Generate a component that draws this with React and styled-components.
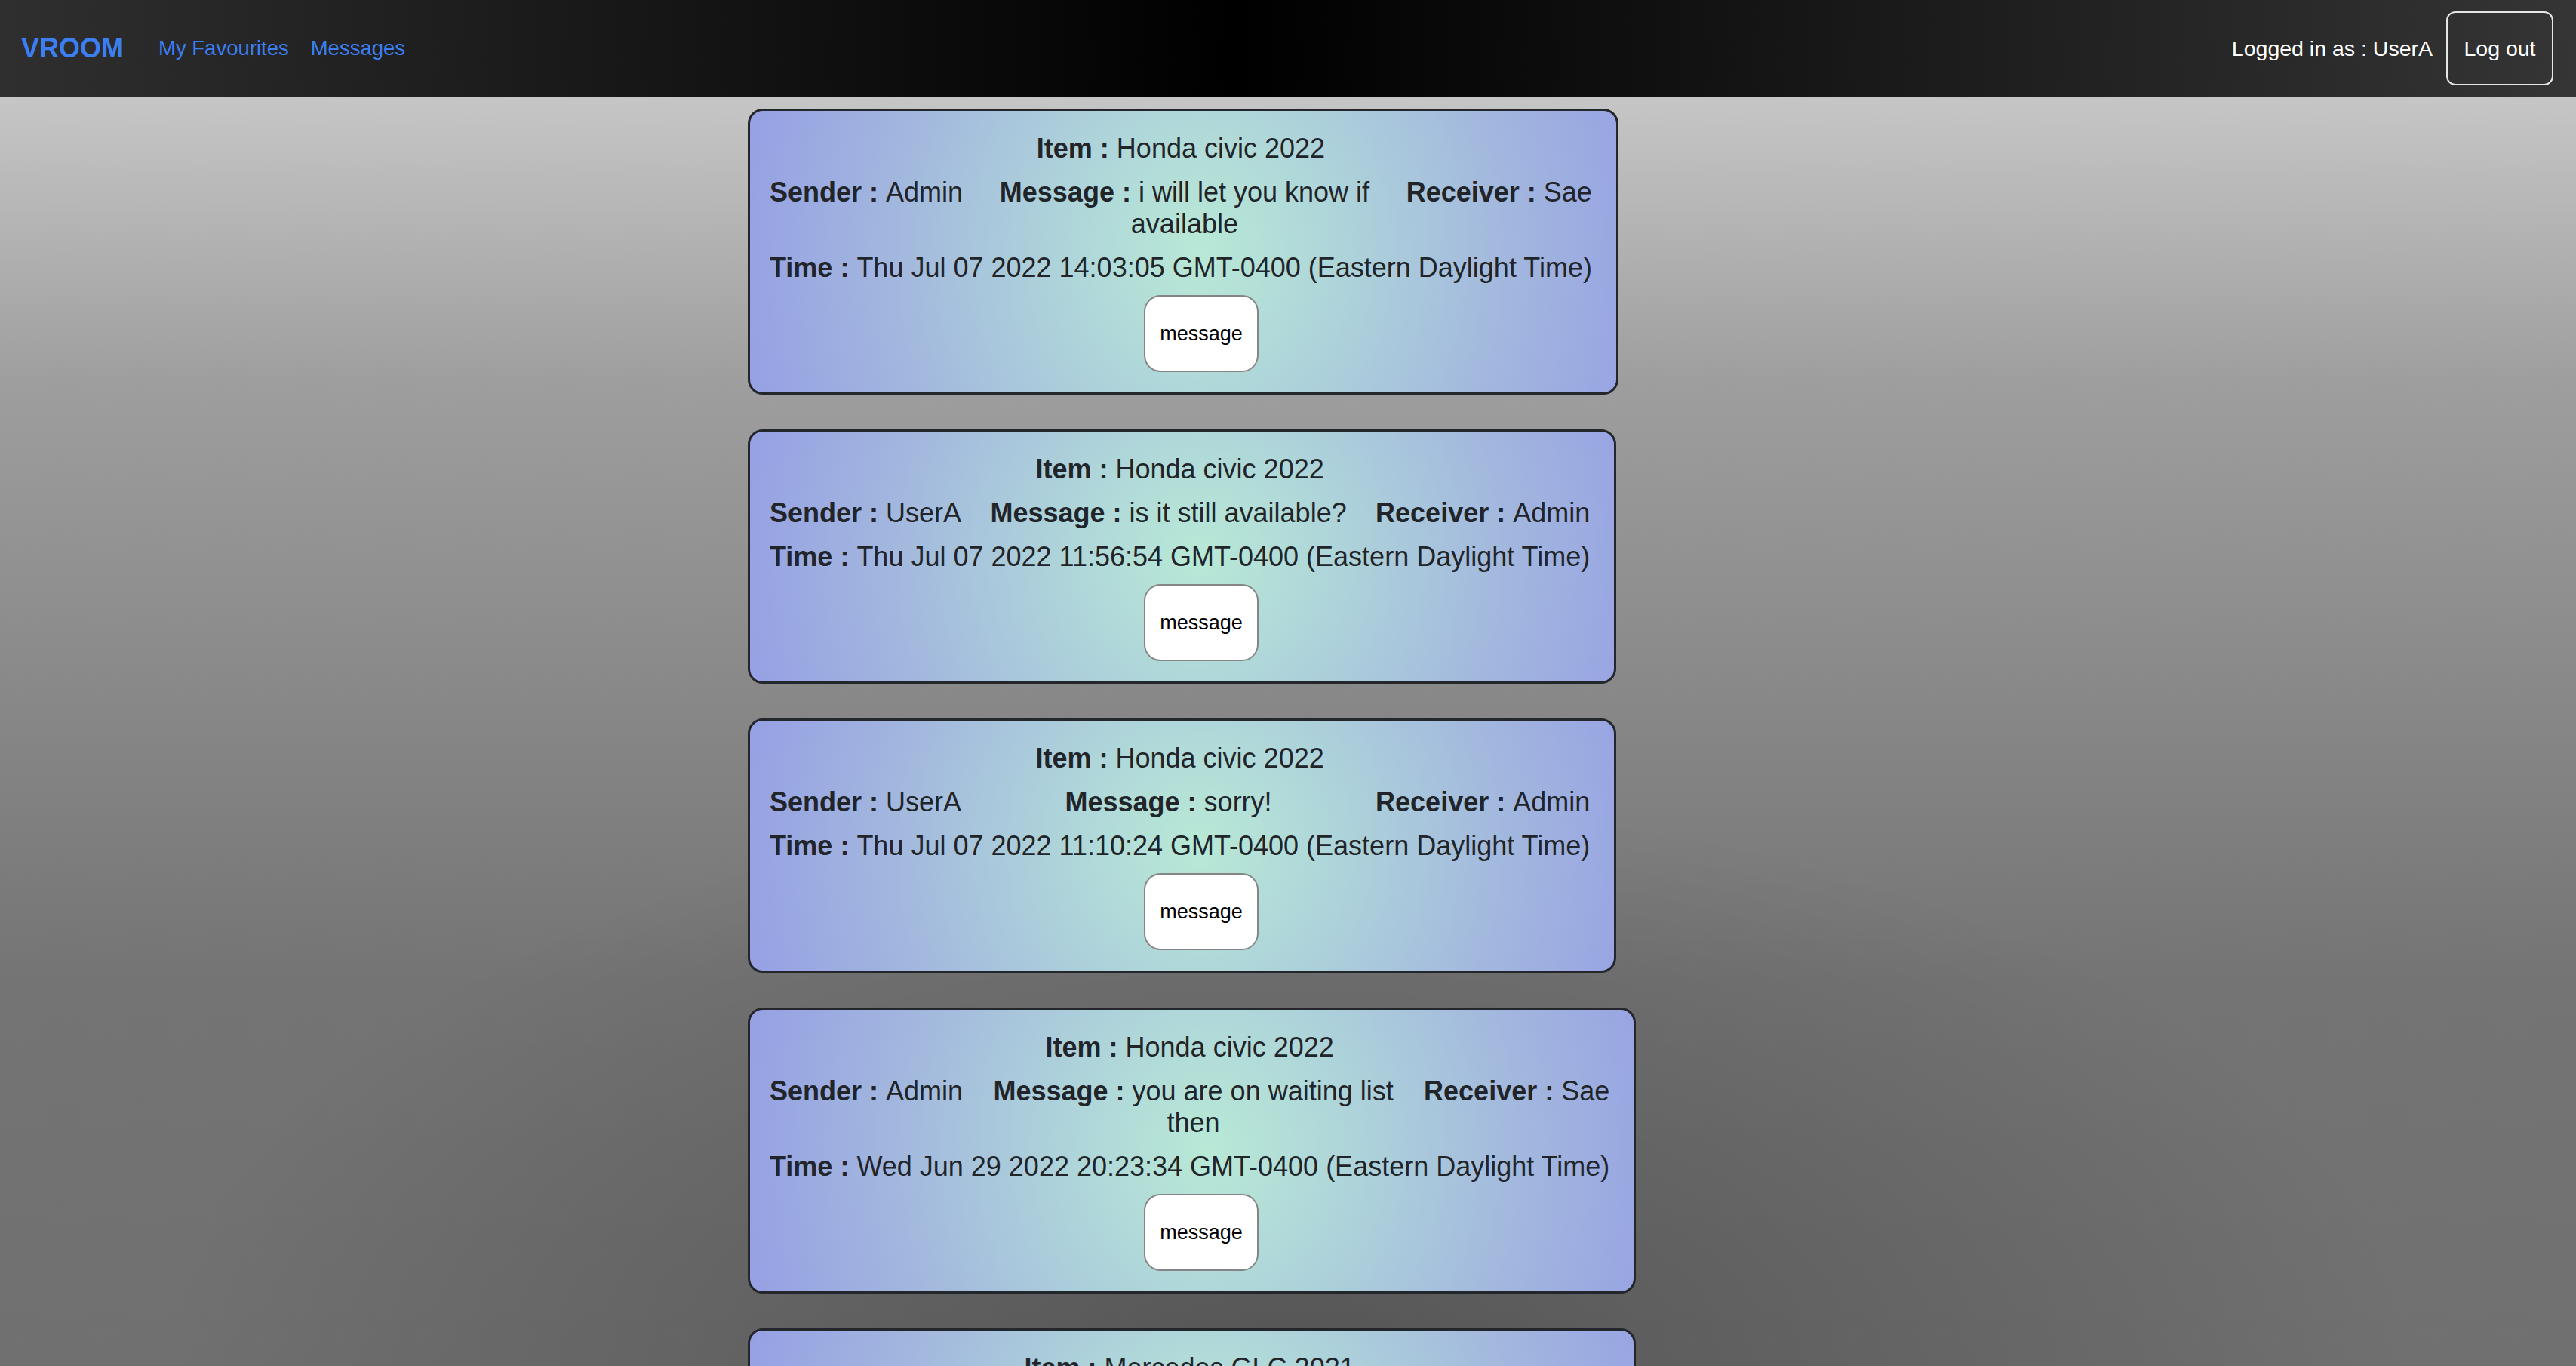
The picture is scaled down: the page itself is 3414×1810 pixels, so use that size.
import styled, { createGlobalStyle } from 'styled-components';

const GlobalStyle = createGlobalStyle`
  html, body {
    margin: 0;
    padding: 0;
  }

  body {
    font-family: "Liberation Sans", Arial, sans-serif;
    color: #212529;
  }
`;

const Page = styled.div`
  height: 100vh;
  overflow: hidden;
  background:
    radial-gradient(
      ellipse 1500px 760px at 50% 100%,
      rgba(0, 0, 0, 0.24) 0%,
      rgba(0, 0, 0, 0) 100%
    ),
    linear-gradient(
      180deg,
      #cdcdcd 0%,
      #c6c6c6 7%,
      #9e9e9e 28%,
      #747474 72%,
      #707070 100%
    );
`;

const NavBar = styled.nav`
  display: flex;
  align-items: center;
  height: 128px;
  padding: 0 30px 0 28px;
  background: linear-gradient(90deg, #2f2f2f 0%, #000 48%, #353535 100%);
`;

const Brand = styled.a`
  color: #3b7ff2;
  font-size: 36px;
  font-weight: bold;
  text-decoration: none;
  margin-right: 46px;
`;

const NavLink = styled.a`
  color: #3b7ff2;
  font-size: 27.5px;
  text-decoration: none;
  margin-right: 29px;
`;

const UserArea = styled.div`
  margin-left: auto;
  display: flex;
  align-items: center;
  gap: 18px;
`;

const LoggedIn = styled.span`
  color: #fff;
  font-size: 28.5px;
`;

const LogoutButton = styled.button`
  width: 142px;
  height: 98px;
  border: 2px solid #e6e6e6;
  border-radius: 12px;
  background: transparent;
  color: #fff;
  font-family: inherit;
  font-size: 28.5px;
`;

const Feed = styled.main`
  width: 1432px;
  margin: 16px auto 0;
  display: flex;
  flex-direction: column;
  align-items: flex-start;
  gap: 46px;
`;

const Card = styled.section`
  display: flex;
  flex-direction: column;
  gap: 16px;
  padding: 29px 32px 27px 26px;
  border: 3px solid #23262b;
  border-radius: 20px;
  font-size: 36px;
  line-height: 42px;
  background: radial-gradient(
    ellipse 54% 190% at 52% 50%,
    #b8e9d6 0%,
    #aed4da 30%,
    #a2b7de 66%,
    #96a0e4 100%
  );
`;

const Label = styled.b`
  font-weight: bold;
`;

const ItemLine = styled.div`
  text-align: center;
  white-space: nowrap;
`;

const PartyRow = styled.div`
  display: flex;
  justify-content: space-between;
  width: 0;
  min-width: 100%;
`;

const Party = styled.div`
  flex: 0 0 auto;
  white-space: nowrap;
`;

const MessageText = styled.div`
  flex: 0 1 auto;
  min-width: 0;
  margin: 0 14px;
  text-align: center;
`;

const TimeLine = styled.div`
  white-space: nowrap;
`;

const ButtonRow = styled.div`
  padding-left: ${(p) => p.$offset}px;
  margin-top: -1px;
`;

const MessageButton = styled.button`
  width: 152px;
  height: 102px;
  border: 2px solid #858585;
  border-radius: 22px;
  background: #fff;
  color: #000;
  font-family: "Liberation Sans", Arial, sans-serif;
  font-size: 27px;
`;

const messages = [
  {
    item: 'Honda civic 2022',
    sender: 'Admin',
    text: 'i will let you know if available',
    receiver: 'Sae',
    time: 'Thu Jul 07 2022 14:03:05 GMT-0400 (Eastern Daylight Time)',
  },
  {
    item: 'Honda civic 2022',
    sender: 'UserA',
    text: 'is it still available?',
    receiver: 'Admin',
    time: 'Thu Jul 07 2022 11:56:54 GMT-0400 (Eastern Daylight Time)',
  },
  {
    item: 'Honda civic 2022',
    sender: 'UserA',
    text: 'sorry!',
    receiver: 'Admin',
    time: 'Thu Jul 07 2022 11:10:24 GMT-0400 (Eastern Daylight Time)',
  },
  {
    item: 'Honda civic 2022',
    sender: 'Admin',
    text: 'you are on waiting list then',
    receiver: 'Sae',
    time: 'Wed Jun 29 2022 20:23:34 GMT-0400 (Eastern Daylight Time)',
  },
  {
    item: 'Mercedes GLC 2021',
    sender: 'UserA',
    text: 'is it still available?',
    receiver: 'Admin',
    time: 'Wed Jun 29 2022 18:41:12 GMT-0400 (Eastern Daylight Time)',
  },
];

const MessageCard = ({ msg }) => (
  <Card>
    <ItemLine>
      <Label>Item : </Label>
      {msg.item}
    </ItemLine>
    <PartyRow>
      <Party>
        <Label>Sender : </Label>
        {msg.sender}
      </Party>
      <MessageText>
        <Label>Message : </Label>
        {msg.text}
      </MessageText>
      <Party>
        <Label>Receiver : </Label>
        {msg.receiver}
      </Party>
    </PartyRow>
    <TimeLine>
      <Label>Time : </Label>
      {msg.time}
    </TimeLine>
    <ButtonRow $offset={496}>
      <MessageButton>message</MessageButton>
    </ButtonRow>
  </Card>
);

const App = () => {
  return (
    <>
      <GlobalStyle />
      <Page>
        <NavBar>
          <Brand href="#">VROOM</Brand>
          <NavLink href="#">My Favourites</NavLink>
          <NavLink href="#">Messages</NavLink>
          <UserArea>
            <LoggedIn>Logged in as : UserA</LoggedIn>
            <LogoutButton>Log out</LogoutButton>
          </UserArea>
        </NavBar>
        <Feed>
          {messages.map((msg, i) => (
            <MessageCard key={i} msg={msg} />
          ))}
        </Feed>
      </Page>
    </>
  );
};

export default App;
